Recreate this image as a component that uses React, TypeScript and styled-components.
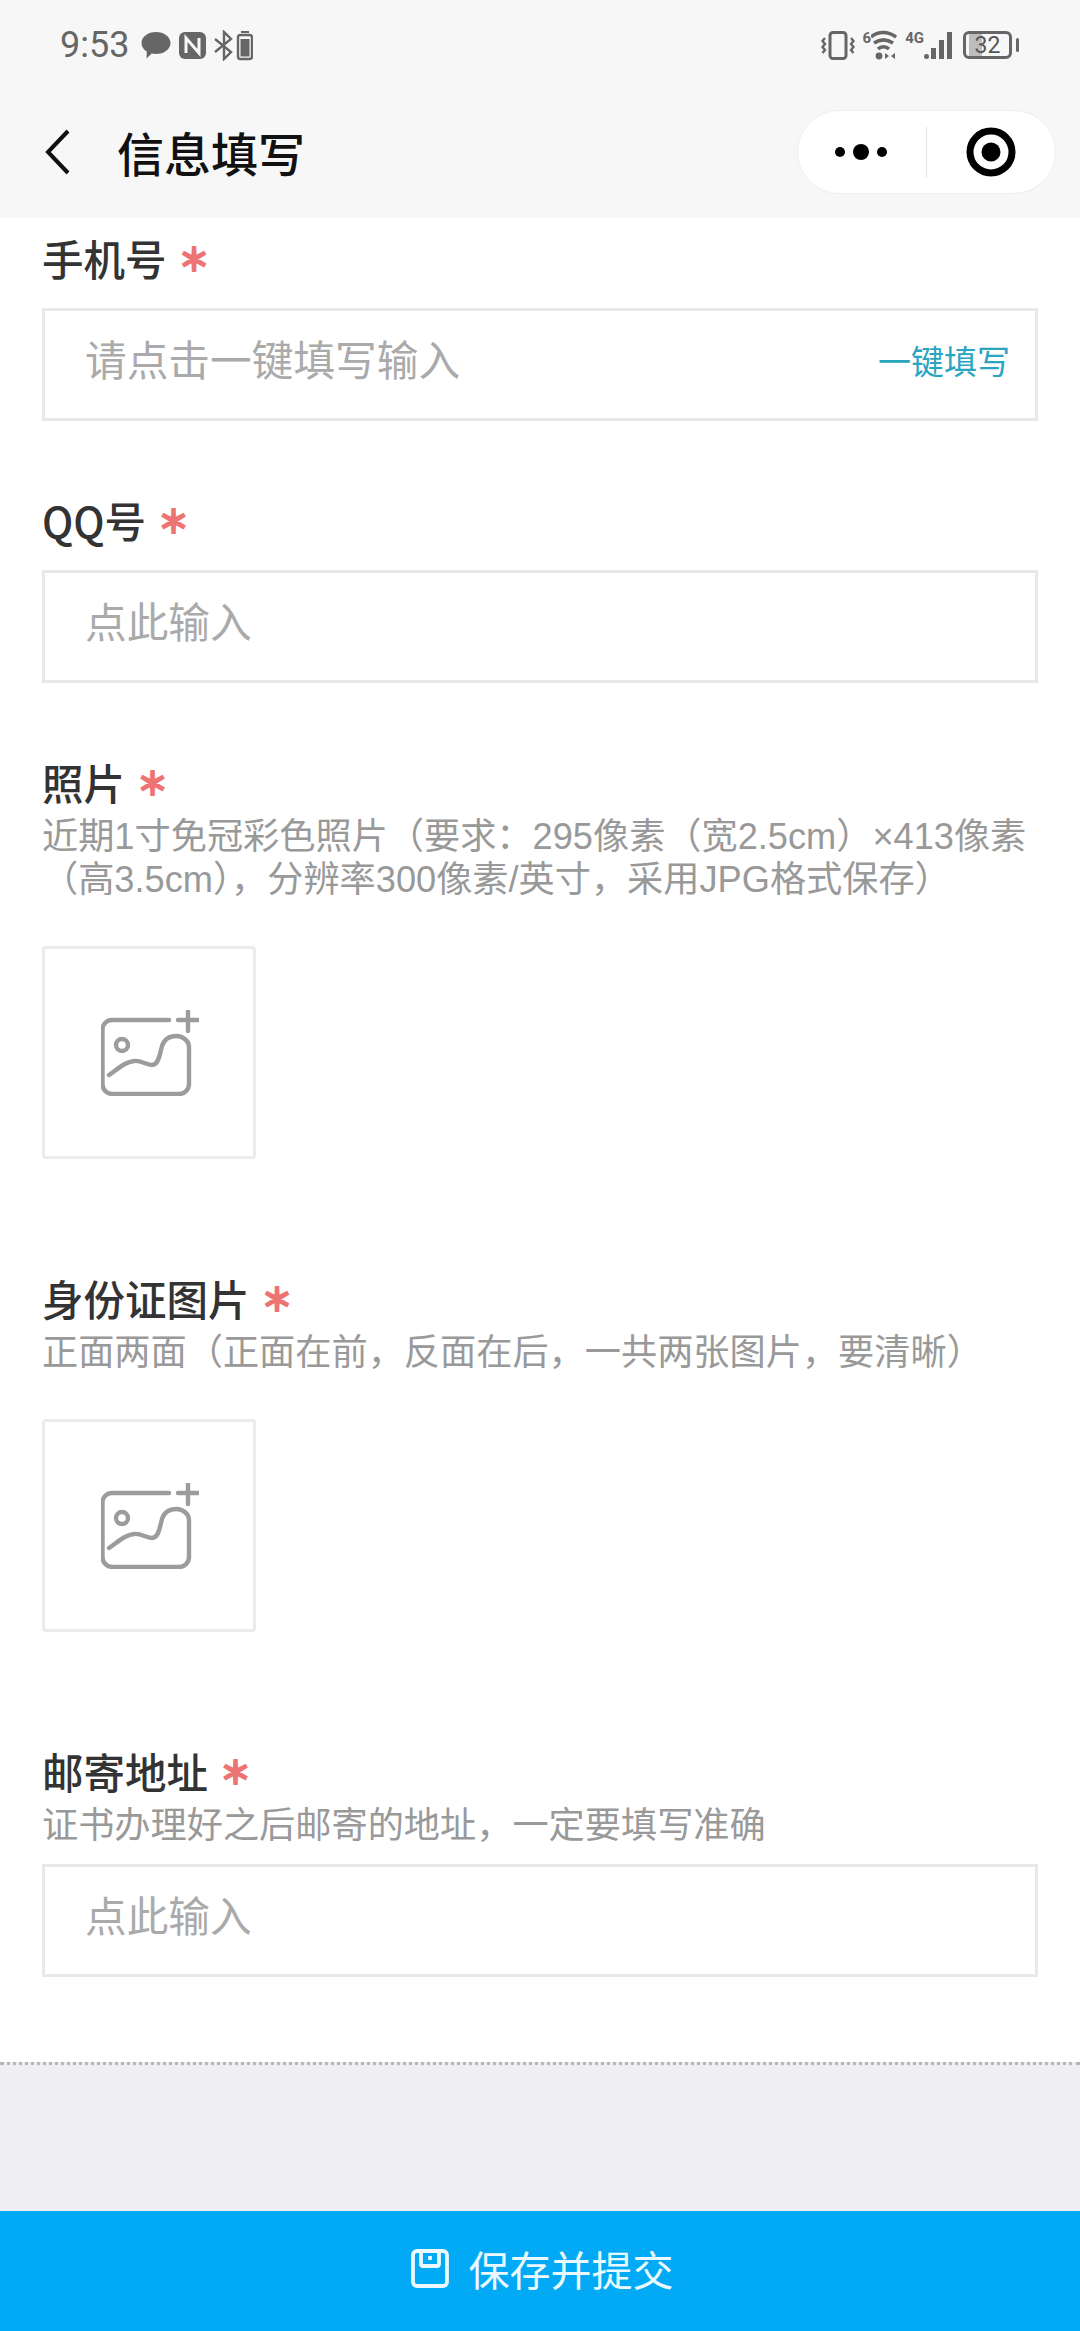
import type { FC } from 'react';
import styled, { createGlobalStyle } from 'styled-components';

const GlobalStyle = createGlobalStyle`
  html, body {
    margin: 0;
    padding: 0;
    background: #fff;
  }

  * {
    box-sizing: border-box;
  }
`;

const Page = styled.div`
  display: flex;
  flex-direction: column;
  width: 1080px;
  height: 2331px;
  overflow: hidden;
  font-family: 'Noto Sans CJK SC', 'Liberation Sans', sans-serif;
  background: #fff;
`;

const Header = styled.header`
  display: flex;
  flex-direction: column;
  height: 218px;
  background: #f7f7f7;
`;

const StatusBar = styled.div`
  display: flex;
  align-items: center;
  justify-content: space-between;
  height: 90px;
  padding: 0 62px 0 60px;
  color: #666;
`;

const StatusGroup = styled.div`
  display: flex;
  align-items: center;
  gap: 8px;
`;

const Clock = styled.span`
  margin-right: 4px;
  font-family: Roboto, 'Liberation Sans', sans-serif;
  font-size: 36px;
  line-height: 40px;
`;

const NetworkTag = styled.span`
  align-self: flex-start;
  margin-right: -8px;
  font-family: Roboto, 'Liberation Sans', sans-serif;
  font-size: 15px;
  font-weight: 700;
  line-height: 16px;
  color: #666;
`;

const Battery = styled.div`
  position: relative;
  display: flex;
  align-items: center;
  justify-content: center;
  width: 49px;
  height: 28px;
  margin-left: 2px;
  margin-right: 6px;
  border: 3px solid #666;
  border-radius: 6px;
  font-family: Roboto, 'Liberation Sans', sans-serif;
  font-size: 23px;
  color: #555;
  background: linear-gradient(to right, transparent 3px, #bdbdbd 3px, #bdbdbd 16px, transparent 16px);

  &::after {
    content: '';
    position: absolute;
    right: -10px;
    top: 4px;
    width: 3px;
    height: 14px;
    border-radius: 2px;
    background: #666;
  }
`;

const NavBar = styled.div`
  display: flex;
  align-items: center;
  height: 84px;
  margin-top: 20px;
  padding: 0 24px 0 45px;
`;

const BackIcon = styled.svg`
  width: 26px;
  height: 46px;
  flex-shrink: 0;
`;

const NavTitle = styled.h1`
  flex: 1;
  margin: 0 0 0 46px;
  font-size: 47px;
  font-weight: 500;
  line-height: 60px;
  color: #111;
`;

const Capsule = styled.div`
  display: flex;
  align-items: center;
  width: 259px;
  height: 84px;
  border: 1px solid #eeeeee;
  border-radius: 42px;
  background: #fff;
`;

const CapsulePart = styled.div`
  display: flex;
  flex: 1;
  align-items: center;
  justify-content: center;
  height: 100%;
`;

const CapsuleDivider = styled.div`
  width: 1px;
  height: 51px;
  background: #e2e2e2;
`;

const Form = styled.main`
  display: flex;
  flex-direction: column;
  padding: 12px 42px 85px;
`;

const Field = styled.section<{ $upload?: boolean; $first?: boolean }>`
  display: flex;
  flex-direction: column;
  margin-top: ${({ $first }) => ($first ? '0' : '71px')};
  padding-bottom: ${({ $upload }) => ($upload ? '40px' : '0')};
`;

const Label = styled.div`
  display: flex;
  align-items: center;
  gap: 12px;
  font-size: 41.5px;
  font-weight: 500;
  line-height: 56px;
  color: #333;
`;

const Required = styled.span`
  font-size: 31px;
  font-weight: 700;
  line-height: 56px;
  color: #ee7474;
  -webkit-text-stroke: 2px #ee7474;
`;

const Hint = styled.p`
  margin: 5px 0 0;
  font-family: 'Liberation Sans', 'Noto Sans CJK SC', sans-serif;
  font-size: 36.2px;
  line-height: 43px;
  color: #999;
`;

const InputBox = styled.div<{ $hinted?: boolean }>`
  display: flex;
  align-items: center;
  justify-content: space-between;
  height: 113px;
  margin-top: ${({ $hinted }) => ($hinted ? '17px' : '22px')};
  padding: 0 25px 0 40px;
  border: 3px solid #e8e8e8;
`;

const Placeholder = styled.span`
  margin-bottom: 14px;
  font-size: 41.7px;
  color: #aaa;
`;

const FillLink = styled.span`
  margin-bottom: 10px;
  font-size: 33px;
  color: #2aa5c0;
`;

const UploadBox = styled.div`
  display: flex;
  align-items: center;
  justify-content: center;
  width: 214px;
  height: 213px;
  margin-top: 45px;
  padding-left: 2px;
  border: 3px solid #ebebeb;
  border-radius: 4px;
`;

const Spacer = styled.div`
  flex: 1;
  border-top: 3px dotted #b5b5b5;
  background: #efeff3;
`;

const SubmitBar = styled.button`
  display: flex;
  align-items: center;
  justify-content: center;
  gap: 20px;
  height: 120px;
  width: 100%;
  border: 0;
  padding: 0 0 6px 4px;
  font-family: inherit;
  font-size: 41px;
  color: #e9f9ff;
  background: #02a9f4;
`;

const PictureAddIcon: FC = () => (
  <svg width="98" height="86" viewBox="0 0 98 86" fill="none" stroke="#9c9c9c" strokeWidth="4.4" strokeLinecap="round">
    <path d="M68 10H11a9.500 9.500 0 0 0-9.500 9.500V74a10 10 0 0 0 10 10H78a10 10 0 0 0 10-10V37C88 31 82 26 75.500 26 68 26 63 30 61 36 59 43 58 55 51 55 45 55 40 50 33 51 24 52 18 58 8 65" />
    <circle cx="21" cy="35" r="6" />
    <path d="M77 10H97M87 1V21" />
  </svg>
);

const SaveIcon: FC = () => (
  <svg width="38" height="39" viewBox="0 0 38 39" fill="none" stroke="#e9f9ff" strokeWidth="3.8" strokeLinejoin="round">
    <path d="M6 2H32A4 4 0 0 1 36 6V33A4 4 0 0 1 32 37H6A4 4 0 0 1 2 33V6A4 4 0 0 1 6 2Z" />
    <path d="M10 2V15A2 2 0 0 0 12 17H26A2 2 0 0 0 28 15V2" />
    <path d="M19 7V11" />
  </svg>
);

const StatusLeftIcons: FC = () => (
  <>
    <svg width="30" height="27" viewBox="0 0 29 27" fill="#666">
      <path d="M14.500 0C22.500 0 29 4.800 29 11S22.500 22 14.500 22C13 22 11.500 21.800 10.200 21.500L5 26.500 5.300 19.600C2 17.600 0 14.500 0 11 0 4.800 6.500 0 14.500 0Z" />
    </svg>
    <svg width="27" height="27" viewBox="0 0 27 27">
      <rect width="27" height="27" rx="6" fill="#666" />
      <path d="M7 21V6L20 21V6" fill="none" stroke="#f7f7f7" strokeWidth="3" />
    </svg>
    <svg width="39" height="31" viewBox="0 0 39 31" fill="none" stroke="#666" strokeWidth="2.400">
      <path d="M1 9L17 22 10 29V2L17 9 1 22" />
      <rect x="24" y="5" width="14" height="24" rx="2.500" />
      <rect x="27" y="1" width="8" height="2" fill="#666" stroke="none" />
      <rect x="26.500" y="9" width="9" height="17.500" fill="#666" stroke="none" />
    </svg>
  </>
);

const StatusRightIcons: FC = () => (
  <>
    <svg width="34" height="29" viewBox="0 0 34 29" fill="none" stroke="#666" strokeWidth="2.400">
      <rect x="9" y="1.500" width="16" height="26" rx="3" strokeWidth="3" />
      <path d="M4 7L1.500 10 4 13 1.500 16 4 19 1.500 22M30 7L32.500 10 30 13 32.500 16 30 19 32.500 22" />
    </svg>
    <NetworkTag>6</NetworkTag>
    <svg width="26" height="30" viewBox="10 0 26 30">
      <path d="M10 7C17 1 27 1 35 7M13 13C19 9 26 9 32 13M17 19C20 16 25 16 28 19" fill="none" stroke="#666" strokeWidth="3.600" />
      <circle cx="18" cy="26" r="3.400" fill="#666" />
      <path d="M24 23L28 26 24 29ZM34 23L30 26 34 29Z" fill="#666" />
    </svg>
    <NetworkTag>4G</NetworkTag>
    <svg width="29" height="29" viewBox="17 0 29 29" fill="#666">
      <rect x="17" y="23" width="5" height="5" rx="2.500" />
      <rect x="24" y="17" width="5" height="11" />
      <rect x="32" y="9" width="5" height="19" />
      <rect x="40" y="1" width="5" height="27" />
    </svg>
  </>
);

interface InputFieldProps {
  first?: boolean;
  label: string;
  hint?: string;
  placeholder: string;
  action?: string;
}

const InputField: FC<InputFieldProps> = ({ first, label, hint, placeholder, action }) => (
  <Field $first={first}>
    <Label>
      {label}
      <Required>＊</Required>
    </Label>
    {hint && <Hint>{hint}</Hint>}
    <InputBox $hinted={Boolean(hint)}>
      <Placeholder>{placeholder}</Placeholder>
      {action && <FillLink>{action}</FillLink>}
    </InputBox>
  </Field>
);

const UploadField: FC<{ label: string; hint: string }> = ({ label, hint }) => (
  <Field $upload>
    <Label>
      {label}
      <Required>＊</Required>
    </Label>
    <Hint>{hint}</Hint>
    <UploadBox>
      <PictureAddIcon />
    </UploadBox>
  </Field>
);

const App: FC = () => (
  <Page>
    <GlobalStyle />
    <Header>
      <StatusBar>
        <StatusGroup>
          <Clock>9:53</Clock>
          <StatusLeftIcons />
        </StatusGroup>
        <StatusGroup>
          <StatusRightIcons />
          <Battery>32</Battery>
        </StatusGroup>
      </StatusBar>
      <NavBar>
        <BackIcon viewBox="0 0 26 46" fill="none" stroke="#111" strokeWidth="4">
          <path d="M23 2L3 23 23 44" />
        </BackIcon>
        <NavTitle>信息填写</NavTitle>
        <Capsule>
          <CapsulePart>
            <svg width="54" height="18" viewBox="0 0 54 18" fill="#000">
              <circle cx="5" cy="9" r="5" />
              <circle cx="26" cy="9" r="8" />
              <circle cx="47" cy="9" r="5" />
            </svg>
          </CapsulePart>
          <CapsuleDivider />
          <CapsulePart>
            <svg width="50" height="50" viewBox="0 0 50 50">
              <circle cx="25" cy="25" r="21" fill="none" stroke="#000" strokeWidth="7" />
              <circle cx="25" cy="25" r="9.500" fill="#000" />
            </svg>
          </CapsulePart>
        </Capsule>
      </NavBar>
    </Header>
    <Form>
      <InputField first label="手机号" placeholder="请点击一键填写输入" action="一键填写" />
      <InputField label="QQ号" placeholder="点此输入" />
      <UploadField
        label="照片"
        hint="近期1寸免冠彩色照片（要求：295像素（宽2.5cm）×413像素（高3.5cm），分辨率300像素/英寸，采用JPG格式保存）"
      />
      <UploadField label="身份证图片" hint="正面两面（正面在前，反面在后，一共两张图片，要清晰）" />
      <InputField label="邮寄地址" hint="证书办理好之后邮寄的地址，一定要填写准确" placeholder="点此输入" />
    </Form>
    <Spacer />
    <SubmitBar>
      <SaveIcon />
      保存并提交
    </SubmitBar>
  </Page>
);

export default App;
